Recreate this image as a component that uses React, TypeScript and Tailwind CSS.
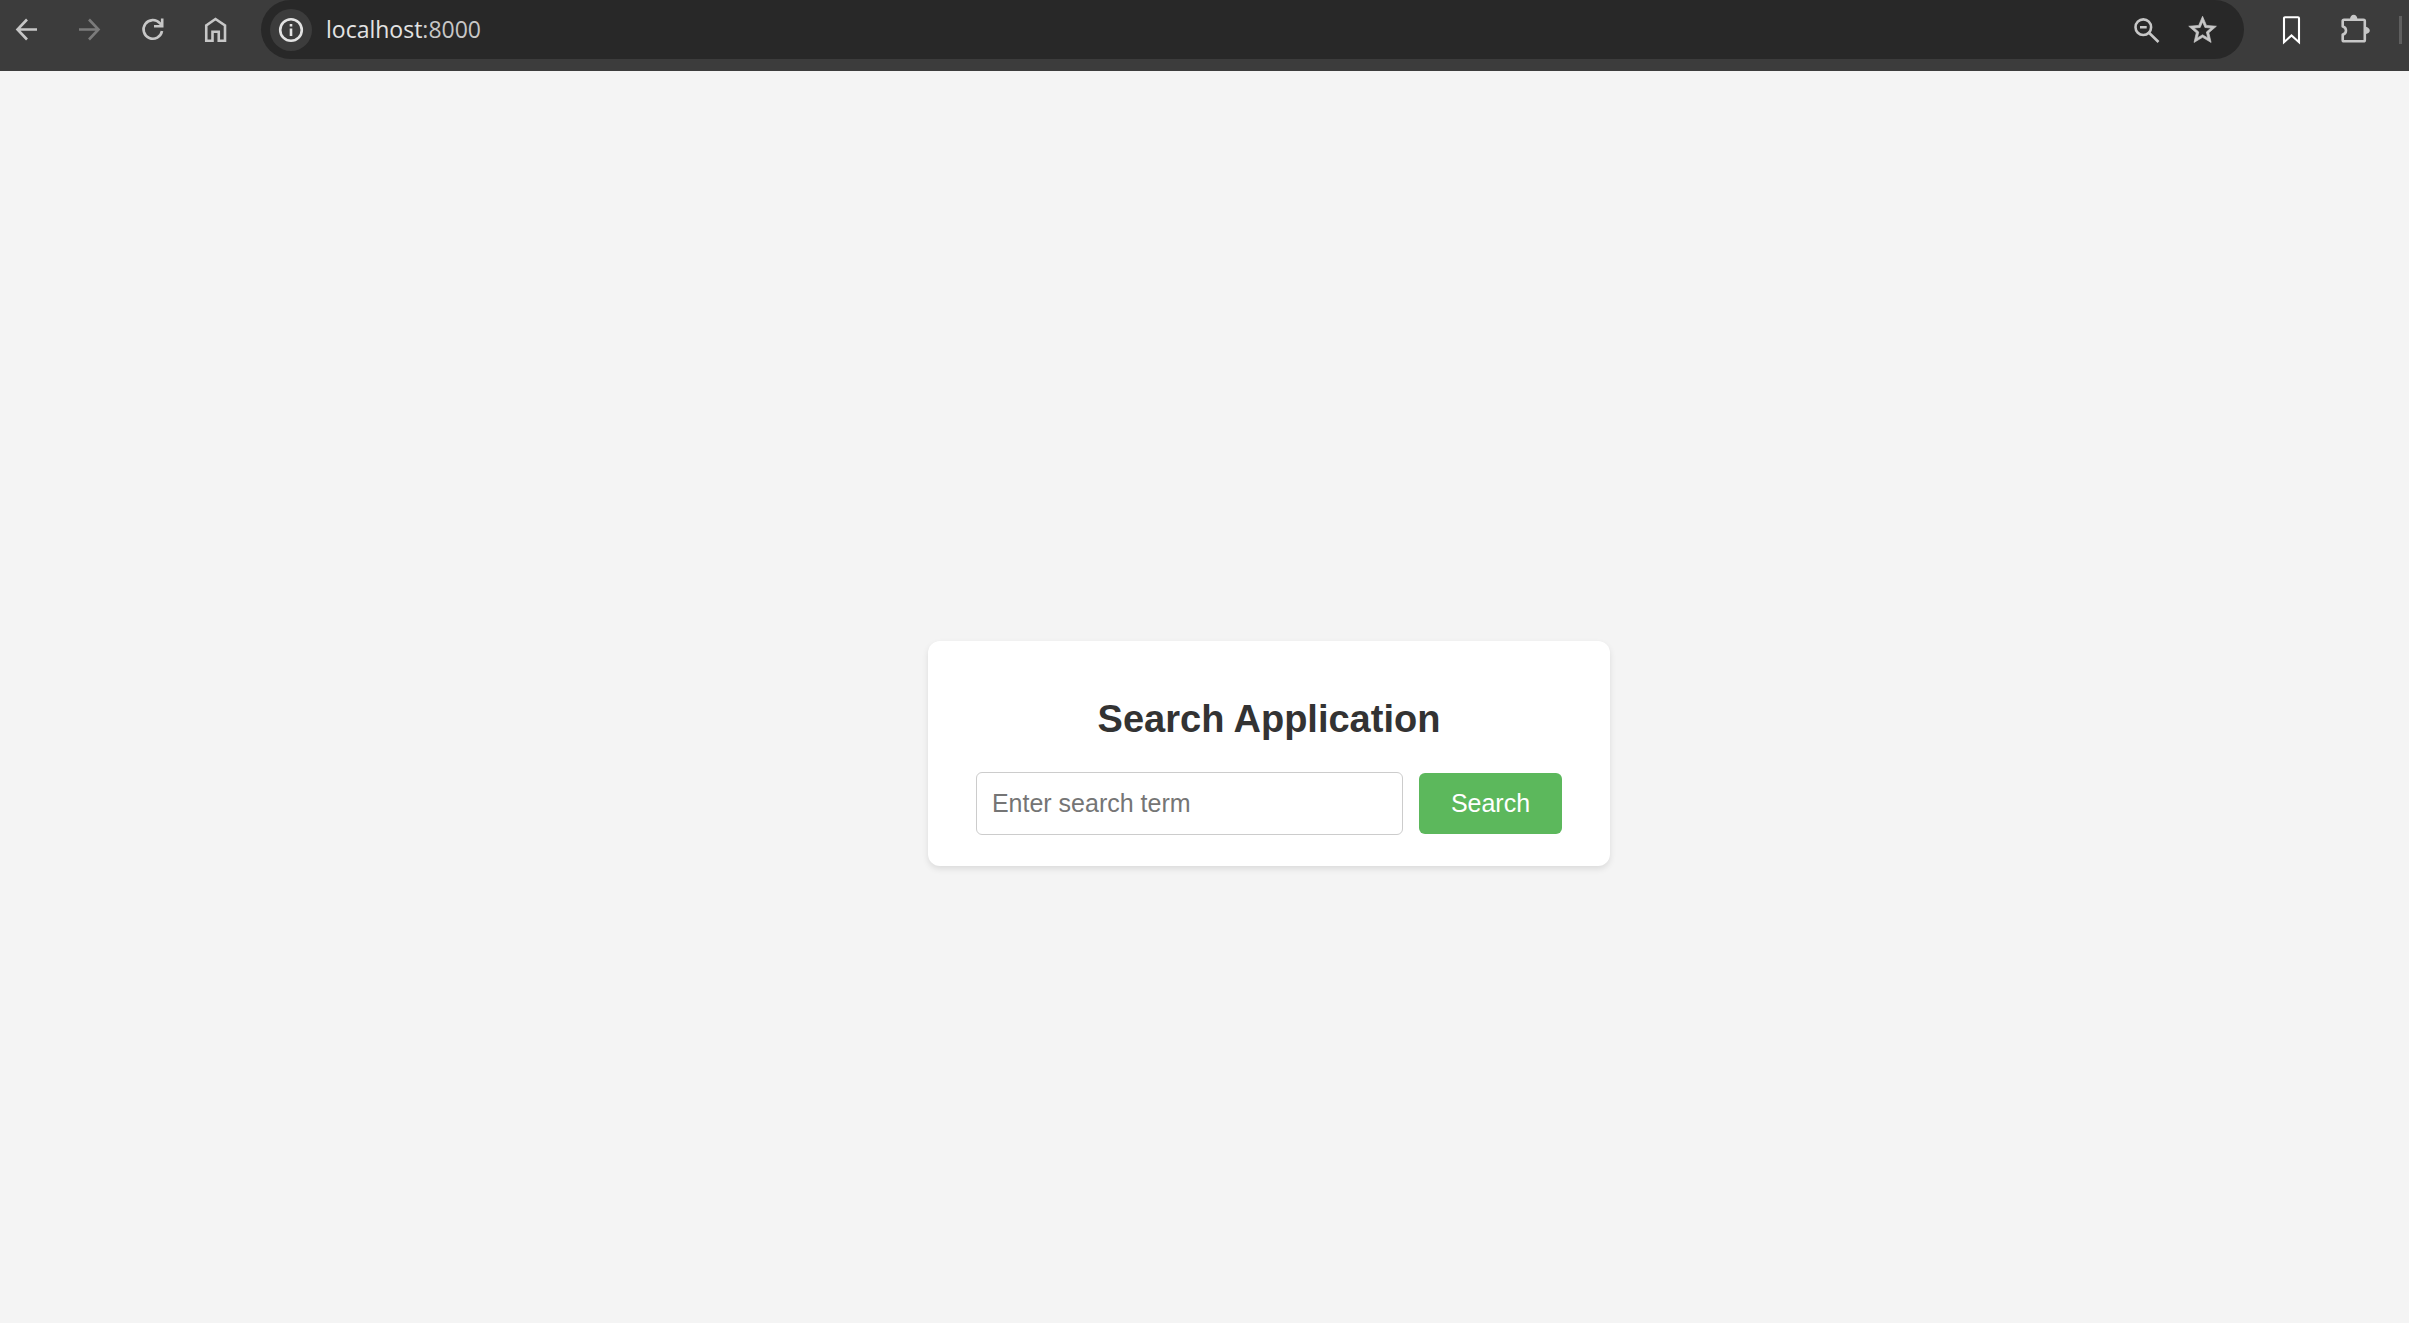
import type { ReactNode } from "react";

function Icon({ children }: { children: ReactNode }) {
  return (
    <svg width="32" height="32" viewBox="0 0 32 32" fill="none" stroke="currentColor" strokeWidth="2.6" aria-hidden="true">
      {children}
    </svg>
  );
}

function ToolButton({ label, tone, children }: { label: string; tone: string; children: ReactNode }) {
  return (
    <button type="button" aria-label={label} className={`flex size-8 shrink-0 items-center justify-center ${tone}`}>
      <Icon>{children}</Icon>
    </button>
  );
}

function Toolbar() {
  return (
    <header className="flex h-[71px] shrink-0 items-start overflow-hidden bg-[#3c3c3c] pl-[11px]">
      <nav aria-label="Navigation" className="flex h-[59px] shrink-0 items-center gap-[31px]">
        <ToolButton label="Back" tone="text-[#c7c7c7]">
          <path d="M26 15.500H7M16 5.500L6.500 15.500L16 25.500" />
        </ToolButton>
        <ToolButton label="Forward" tone="text-[#7b7b7b]">
          <path d="M5 15.500H24M15 5.500L24.500 15.500L15 25.500" />
        </ToolButton>
        <ToolButton label="Reload" tone="text-[#c7c7c7]">
          <path d="M25 17A9.300 9.300 0 1 1 22.800 9.200L25 11.500M25.200 4.500V12.300H17" />
        </ToolButton>
        <ToolButton label="Home" tone="text-[#c7c7c7]">
          <path d="M6.250 26.750V11.500L15.500 5L25 11.500V26.750H18.750V17.750H12.500V26.750Z" />
        </ToolButton>
      </nav>
      <div className="ml-[29px] flex h-[59px] min-w-0 flex-1 items-center rounded-full bg-[#282828] pr-[25px] pl-[9px]">
        <button type="button" aria-label="Site information" className="flex size-[42px] shrink-0 items-center justify-center rounded-full bg-[#3c3c3c] text-[#e3e3e3]">
          <Icon>
            <circle cx="16" cy="16" r="10.800" />
            <path d="M16 14.500V22M16 10V12.600" />
          </Icon>
        </button>
        <div className="ml-3.5 flex-1 font-['Open_Sans',sans-serif] text-[23px] text-[#e3e3e3]">
          localhost<span className="text-[#c7c7c7]">:8000</span>
        </div>
        <div className="flex items-center gap-6">
          <ToolButton label="Zoom" tone="text-[#c7c7c7]">
            <circle cx="12.300" cy="13.200" r="7.800" />
            <path d="M18 18.700L27.500 28M9 13.200H15.700" />
          </ToolButton>
          <ToolButton label="Bookmark this page" tone="text-[#c7c7c7]">
            <path
              transform="translate(-1 -0.500) scale(1.380)"
              fill="currentColor"
              fillRule="evenodd"
              strokeWidth="0.500"
              d="M22 9.240l-7.190-.620L12 2 9.190 8.630 2 9.240l5.460 4.730L5.820 21 12 17.270 18.180 21l-1.630-7.030L22 9.240zM12 15.400l-3.760 2.270 1-4.280-3.320-2.880 4.380-.380L12 6.100l1.710 4.040 4.380.380-3.320 2.880 1 4.280L12 15.400z"
            />
          </ToolButton>
        </div>
      </div>
      <div className="ml-8 flex h-[59px] shrink-0 items-center pr-[7px]">
        <ToolButton label="Bookmarks" tone="text-white">
          <path strokeWidth="2.100" d="M8 28.200V4.200Q8 3.200 9 3.200H22Q23 3.200 23 4.200V28.200L15.500 21.500Z" />
        </ToolButton>
        <div className="ml-8 flex">
          <ToolButton label="Extensions" tone="text-[#c7c7c7]">
            <path
              strokeLinejoin="round"
              d="M4 5.800H23.500Q24.800 5.800 24.800 7V26Q24.800 27.300 23.500 27.300H4Q2.700 27.300 2.700 26V20.600A4.200 4.200 0 0 0 2.700 12.400V7Q2.700 5.800 4 5.800Z"
            />
            <path stroke="none" fill="currentColor" d="M10 5.500A3.700 4.800 0 0 1 17.400 5.500ZM25 12.800A4.800 3.700 0 0 1 25 20.200Z" />
          </ToolButton>
        </div>
        <div className="ml-[27px] h-7 w-[3px] bg-[#5f5f5f]" />
      </div>
    </header>
  );
}

function SearchCard() {
  return (
    <section className="rounded-xl bg-white px-12 pt-[54px] pb-[31px] shadow-[0_3px_6px_rgba(0,0,0,0.1)]">
      <h1 className="text-center text-[38px] leading-12 font-bold text-[#333333]">Search Application</h1>
      <form className="mt-[29px] flex items-center gap-4" onSubmit={(e) => e.preventDefault()}>
        <input
          type="text"
          aria-label="Search term"
          placeholder="Enter search term"
          className="h-[63px] w-[427px] rounded-md border border-[#cccccc] px-[15px] text-[25px] placeholder:text-[#757575]"
        />
        <button type="submit" className="h-[61px] rounded-md bg-[#5cb85c] px-8 text-[25px] text-white">
          Search
        </button>
      </form>
    </section>
  );
}

export default function App() {
  return (
    <div className="flex min-h-screen flex-col bg-[#f4f4f4] font-['Liberation_Sans',Arial,sans-serif]">
      <Toolbar />
      <main className="flex flex-1 items-center justify-center pt-[113px] pl-[129px]">
        <SearchCard />
      </main>
    </div>
  );
}
